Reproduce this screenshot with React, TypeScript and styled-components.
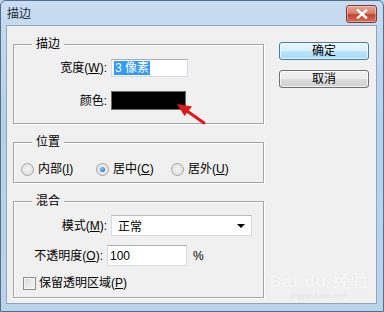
import React from 'react';
import styled, { createGlobalStyle } from 'styled-components';

const GlobalStyle = createGlobalStyle`
  html, body {
    margin: 0;
    padding: 0;
    background: #bcd3ea;
  }
  body {
    font-family: 'Liberation Sans', 'Noto Sans CJK SC', sans-serif;
    font-size: 12px;
    color: #000;
  }
  * {
    box-sizing: border-box;
  }
`;

const Window = styled.div`
  position: relative;
  width: 384px;
  height: 312px;
  display: flex;
  flex-direction: column;
  padding: 0 6px 7px 5px;
  border: 1px solid #51708f;
  border-radius: 6px 6px 0 0;
  background: linear-gradient(180deg, #c9dcf1 0%, #b7cfe9 40%, #bcd3ea 100%);
`;

const TitleBar = styled.div`
  height: 24px;
  display: flex;
  align-items: center;
  justify-content: space-between;
  padding-left: 1px;
  padding-top: 1px;
  line-height: 1;
`;

const Title = styled.span`
  font-size: 12px;
  color: #1e2a36;
`;

const CloseButton = styled.div`
  width: 31px;
  height: 18px;
  margin-top: 1px;
  border: 1px solid #7d3b34;
  border-radius: 3px;
  display: flex;
  align-items: center;
  justify-content: center;
  background: linear-gradient(180deg, #e8a493 0%, #d7806d 45%, #c2432c 55%, #d3715a 100%);
  box-shadow: inset 0 0 0 1px rgba(255, 255, 255, 0.35);
`;

const Body = styled.div`
  flex: 1;
  display: flex;
  background: #f0f0f0;
  border: 1px solid #8ea6c0;
  padding: 0 0 0 6px;
`;

const LeftColumn = styled.div`
  width: 251px;
  display: flex;
  flex-direction: column;
  padding-top: 18px;
  gap: 18px;
`;

const RightColumn = styled.div`
  display: flex;
  flex-direction: column;
  gap: 10px;
  padding: 16px 0 0 15px;
`;

const Group = styled.div<{ $height: number }>`
  position: relative;
  height: ${(p) => p.$height}px;
  border: 1px solid #a5a5a5;
  box-shadow: 1px 1px 0 #ffffff, inset 1px 1px 0 #ffffff;
`;

const Legend = styled.span`
  position: absolute;
  top: -9px;
  left: 18px;
  padding: 0 4px;
  background: #f0f0f0;
  line-height: 16px;
`;

const GroupBody = styled.div<{ $top: number; $gap: number }>`
  display: flex;
  flex-direction: column;
  gap: ${(p) => p.$gap}px;
  padding-top: ${(p) => p.$top}px;
`;

const FieldRow = styled.div<{ $labelWidth: number }>`
  display: grid;
  grid-template-columns: ${(p) => p.$labelWidth}px auto;
  column-gap: 4px;
  align-items: center;
  justify-content: start;
`;

const Label = styled.span`
  text-align: right;
  white-space: nowrap;
  line-height: 16px;
`;

const Key = styled.span`
  text-decoration: underline;
  text-underline-offset: 1px;
`;

const TextInput = styled.div<{ $width: number; $height: number }>`
  width: ${(p) => p.$width}px;
  height: ${(p) => p.$height}px;
  display: flex;
  align-items: center;
  background: #ffffff;
  border: 1px solid #d6dbe2;
  border-top-color: #abadb3;
  padding-left: 2px;
  line-height: 14px;
`;

const Selected = styled.span`
  background: #3399ff;
  color: #ffffff;
  padding: 0 1px;
`;

const Swatch = styled.div`
  width: 75px;
  height: 19px;
  background: #000000;
  border: 1px solid #6b6b6b;
`;

const Select = styled.div`
  width: 141px;
  height: 21px;
  display: flex;
  align-items: center;
  justify-content: space-between;
  padding: 0 6px 0 6px;
  background: #ffffff;
  border: 1px solid #d6dbe2;
  border-top-color: #b9bcc2;
`;

const Caret = styled.span`
  width: 0;
  height: 0;
  border-left: 4px solid transparent;
  border-right: 4px solid transparent;
  border-top: 4px solid #000000;
`;

const InlineField = styled.div`
  display: flex;
  align-items: center;
  gap: 6px;
`;

const RadioRow = styled.div`
  display: flex;
  padding: 18px 0 0 7px;
`;

const RadioItem = styled.label`
  width: 75px;
  display: flex;
  align-items: center;
  gap: 4px;
  line-height: 16px;
`;

const RadioDot = styled.span<{ $checked?: boolean }>`
  width: 13px;
  height: 13px;
  border-radius: 50%;
  border: 1px solid #a3a3a3;
  background: radial-gradient(circle at 50% 50%, #f4f4f4 0%, #dcdcdc 100%);
  display: flex;
  align-items: center;
  justify-content: center;
  &::after {
    content: '';
    width: 5px;
    height: 5px;
    border-radius: 50%;
    background: ${(p) => (p.$checked ? 'radial-gradient(circle at 40% 35%, #8fd0ff 0%, #1f6fb8 80%)' : 'transparent')};
  }
`;

const CheckRow = styled.label`
  display: flex;
  align-items: center;
  gap: 3px;
  padding-left: 9px;
  line-height: 16px;
`;

const CheckBox = styled.span`
  width: 13px;
  height: 13px;
  border: 1px solid #8e8f8f;
  background: linear-gradient(135deg, #dcdcdc 0%, #f6f6f6 100%);
  box-shadow: inset 0 0 0 1px #f4f4f4;
`;

const Button = styled.div<{ $default?: boolean }>`
  width: 90px;
  height: 18px;
  display: flex;
  align-items: center;
  justify-content: center;
  border: 1px solid ${(p) => (p.$default ? '#3c7fb1' : '#707070')};
  border-radius: 3px;
  background: ${(p) =>
    p.$default
      ? 'linear-gradient(180deg, #eaf6fd 0%, #d9f0fc 50%, #bee6fd 51%, #a7d9f5 100%)'
      : 'linear-gradient(180deg, #f2f2f2 0%, #ebebeb 50%, #dddddd 51%, #cfcfcf 100%)'};
  box-shadow: inset 0 0 0 1px rgba(255, 255, 255, 0.7);
  line-height: 1;
`;

const ArrowLayer = styled.svg`
  position: absolute;
  left: 170px;
  top: 96px;
  pointer-events: none;
`;

const Watermark = styled.div`
  position: absolute;
  left: 268px;
  top: 266px;
  display: flex;
  flex-direction: column;
  align-items: center;
  color: rgba(255, 255, 255, 0.7);
  pointer-events: none;
`;

const WatermarkMain = styled.span`
  font-size: 17px;
  font-weight: bold;
  letter-spacing: 1px;
  text-shadow: 0 0 1px rgba(200, 200, 200, 0.4);
`;

const WatermarkSub = styled.span`
  font-size: 7px;
  color: rgba(225, 225, 225, 0.9);
`;

export default function App() {
  return (
    <>
      <GlobalStyle />
      <Window>
        <TitleBar>
          <Title>描边</Title>
          <CloseButton>
            <svg width="12" height="10" viewBox="0 0 12 10">
              <path d="M2 1.5 L10 8.5 M10 1.5 L2 8.5" stroke="#ffffff" strokeWidth="2.4" strokeLinecap="square" />
            </svg>
          </CloseButton>
        </TitleBar>
        <Body>
          <LeftColumn>
            <Group $height={80}>
              <Legend>描边</Legend>
              <GroupBody $top={14} $gap={14}>
                <FieldRow $labelWidth={93}>
                  <Label>
                    宽度(<Key>W</Key>):
                  </Label>
                  <TextInput $width={77} $height={18}>
                    <Selected>3 像素</Selected>
                  </TextInput>
                </FieldRow>
                <FieldRow $labelWidth={93}>
                  <Label>颜色:</Label>
                  <Swatch />
                </FieldRow>
              </GroupBody>
            </Group>

            <Group $height={41}>
              <Legend>位置</Legend>
              <RadioRow>
                <RadioItem>
                  <RadioDot />
                  <span>
                    内部(<Key>I</Key>)
                  </span>
                </RadioItem>
                <RadioItem>
                  <RadioDot $checked />
                  <span>
                    居中(<Key>C</Key>)
                  </span>
                </RadioItem>
                <RadioItem>
                  <RadioDot />
                  <span>
                    居外(<Key>U</Key>)
                  </span>
                </RadioItem>
              </RadioRow>
            </Group>

            <Group $height={97}>
              <Legend>混合</Legend>
              <GroupBody $top={13} $gap={9}>
                <FieldRow $labelWidth={93}>
                  <Label>
                    模式(<Key>M</Key>):
                  </Label>
                  <Select>
                    <span>正常</span>
                    <Caret />
                  </Select>
                </FieldRow>
                <FieldRow $labelWidth={89}>
                  <Label>
                    不透明度(<Key>O</Key>):
                  </Label>
                  <InlineField>
                    <TextInput $width={80} $height={21}>
                      100
                    </TextInput>
                    <span>%</span>
                  </InlineField>
                </FieldRow>
                <CheckRow>
                  <CheckBox />
                  <span>
                    保留透明区域(<Key>P</Key>)
                  </span>
                </CheckRow>
              </GroupBody>
            </Group>
          </LeftColumn>

          <RightColumn>
            <Button $default>确定</Button>
            <Button>取消</Button>
          </RightColumn>
        </Body>

        <ArrowLayer width="40" height="32" viewBox="0 0 40 32">
          <path d="M33 26 L16 14" stroke="#e01818" strokeWidth="3" strokeLinecap="round" />
          <path d="M6 7 L21 9.5 L13.5 19 Z" fill="#e01818" />
        </ArrowLayer>

        <Watermark>
          <WatermarkMain>Bai du 经验</WatermarkMain>
          <WatermarkSub>jingyan.baidu.com</WatermarkSub>
        </Watermark>
      </Window>
    </>
  );
}
